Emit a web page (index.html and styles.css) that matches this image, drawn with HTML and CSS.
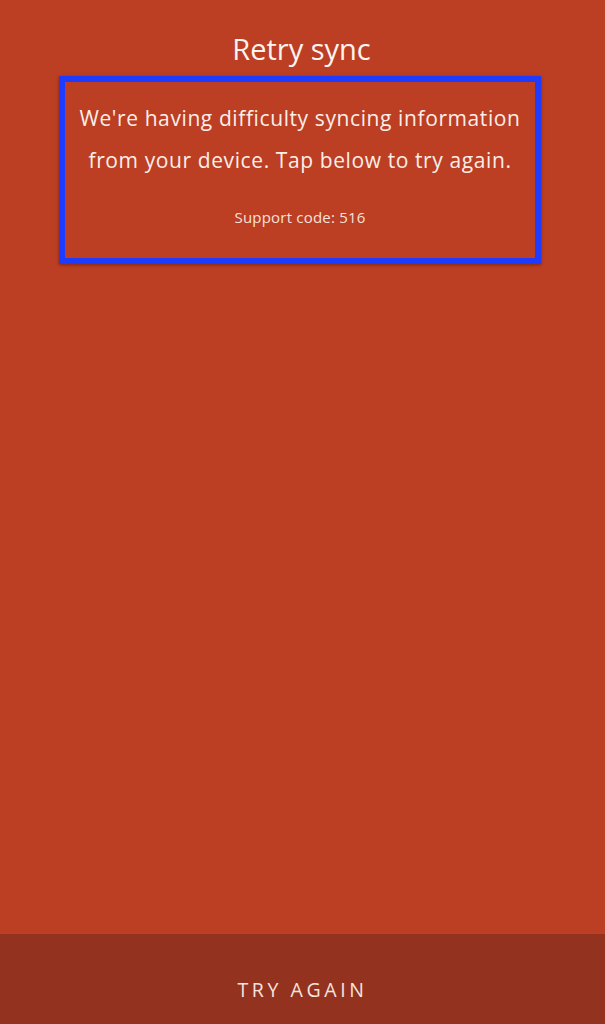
FILE: index.html
```html
<!DOCTYPE html>
<html>
<head>
<meta charset="utf-8">
<link rel="stylesheet" href="styles.css">
</head>
<body>
<div class="screen">
  <main class="content">
    <h1 class="title">Retry sync</h1>
    <section class="box">
      <p class="message">We're having difficulty syncing information from your device. Tap below to try again.</p>
      <p class="code">Support code: 516</p>
    </section>
  </main>
  <footer class="action">TRY AGAIN</footer>
</div>
</body>
</html>
```
FILE: styles.css
```css
html, body {
  margin: 0;
  padding: 0;
}
body {
  font-family: "Open Sans", "Noto Sans", sans-serif;
  color: #fbeee9;
  background: #bc3e23;
}
.screen {
  width: 605px;
  height: 1024px;
  display: flex;
  flex-direction: column;
  background: #bc3e23;
}
.content {
  flex: 1;
  display: flex;
  flex-direction: column;
  align-items: center;
  padding-top: 29px;
}
.title {
  margin: 0 0 0 -2px;
  font-weight: 400;
  font-size: 29px;
  line-height: 40px;
  color: #fdf3ef;
}
.box {
  box-sizing: border-box;
  width: 482px;
  height: 188px;
  margin: 7px 5px 0 0;
  border: 6px solid #1f3bff;
  box-shadow: 0 1px 3px rgba(0,0,0,0.35);
  display: flex;
  flex-direction: column;
  align-items: center;
  padding-top: 15px;
}
.message {
  margin: 0;
  width: 462px;
  text-align: center;
  font-size: 21px;
  letter-spacing: 0.6px;
  line-height: 42px;
  color: #fbeee9;
}
.code {
  margin: 26px 0 0;
  font-size: 15px;
  letter-spacing: 0.2px;
  line-height: 20px;
  color: #f6e2dc;
}
.action {
  height: 90px;
  background: #93321f;
  display: flex;
  align-items: center;
  justify-content: center;
  font-size: 19.5px;
  letter-spacing: 3.6px;
  color: #f6e4df;
  padding-top: 20px;
  box-sizing: border-box;
}
```
